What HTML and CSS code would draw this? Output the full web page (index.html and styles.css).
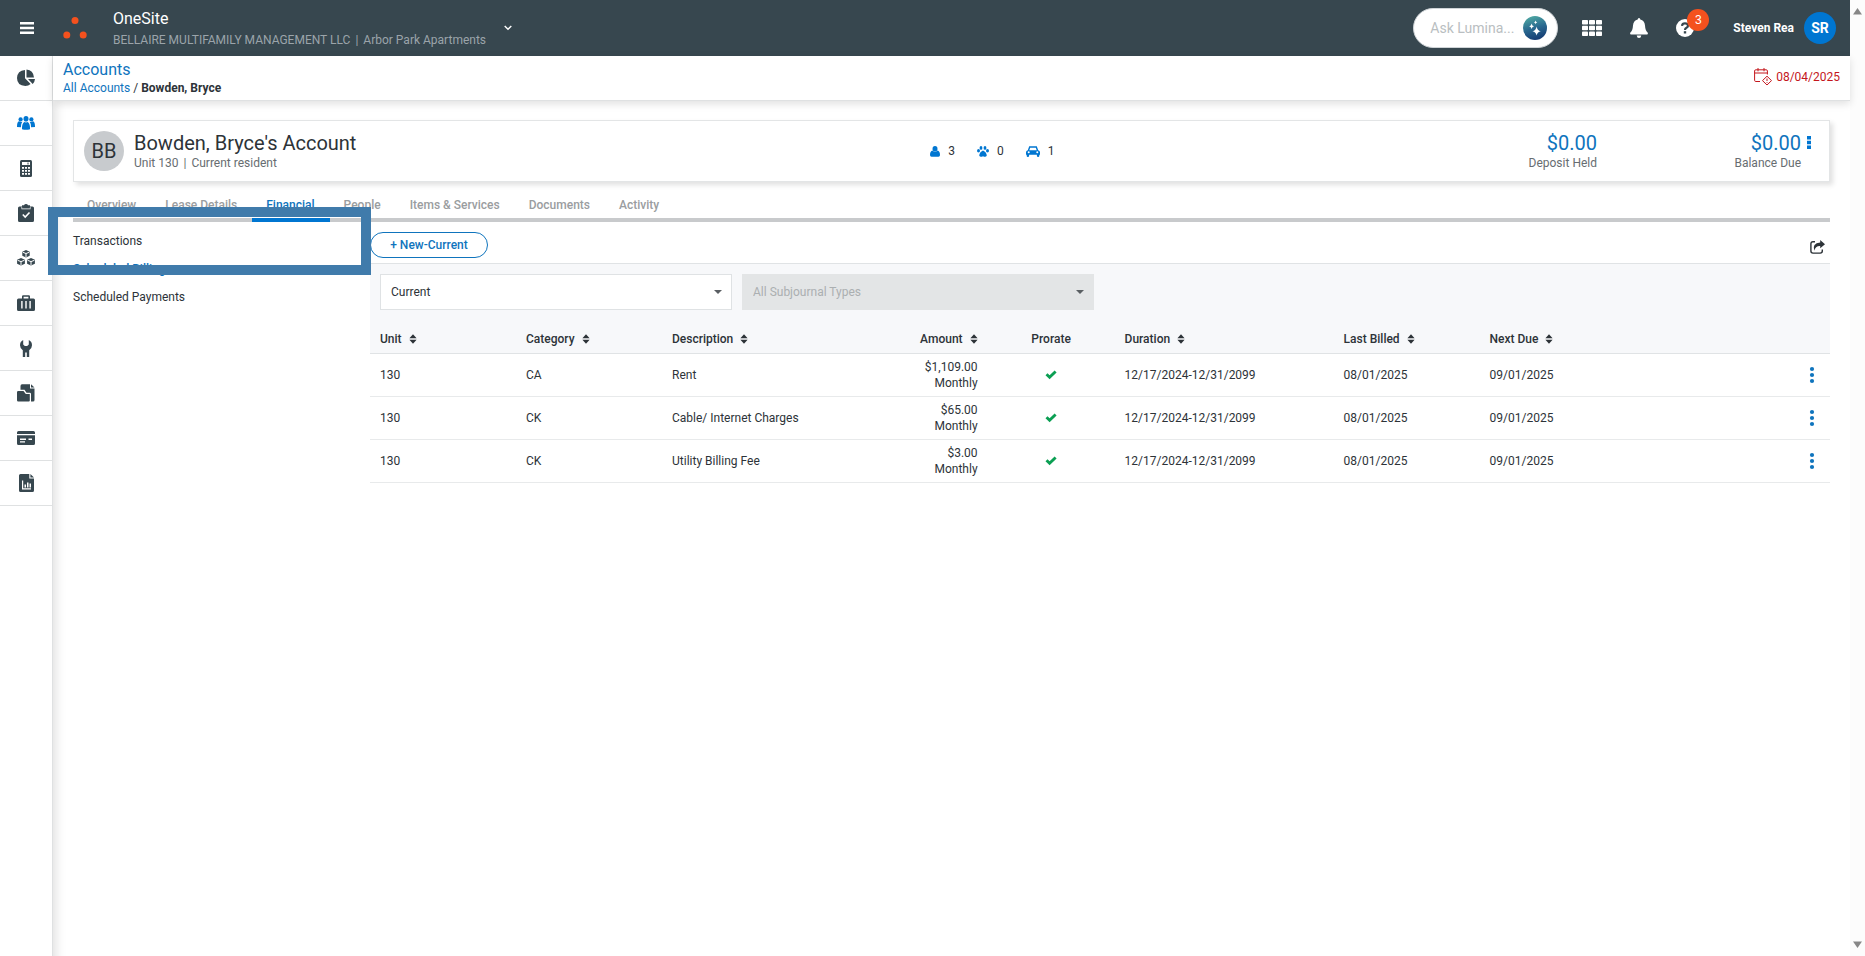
FILE: index.html
```html
<!DOCTYPE html>
<html lang="en">

<head>
    <meta charset="UTF-8">
    <meta name="viewport" content="width=device-width, initial-scale=1.0">
    <title>OneSite - Bowden, Bryce's Account</title>
    <link rel="stylesheet" href="styles.css">
</head>

<body>
    <!-- shared icons -->
    <svg class="sprite" aria-hidden="true">
        <symbol id="icon-sort" viewBox="0 0 8 10">
            <path d="M4 0.3 7.6 4.2H0.4zM4 9.7 0.4 5.8h7.2z" />
        </symbol>
        <symbol id="icon-check" viewBox="0 0 12 10">
            <path d="M0.5 5.2 2.5 3.2 4.6 5.2 9.6 0.5 11.6 2.4 4.6 9.2z" />
        </symbol>
        <symbol id="icon-dots" viewBox="0 0 6 18">
            <circle cx="3" cy="3" r="2.1" />
            <circle cx="3" cy="9" r="2.1" />
            <circle cx="3" cy="15" r="2.1" />
        </symbol>
    </svg>

    <div class="app">
        <header class="topbar">
            <button class="icon-button menu-button" aria-label="Menu">
                <svg width="14" height="12" viewBox="0 0 14 12"><path d="M0 0h14v2.4H0zM0 4.8h14v2.4H0zM0 9.6h14V12H0z" /></svg>
            </button>
            <svg class="logo" width="24" height="22" viewBox="0 0 24 22">
                <circle cx="12" cy="3.6" r="3.5" />
                <circle cx="3.8" cy="18" r="3.5" />
                <circle cx="20.2" cy="18" r="3.5" />
            </svg>
            <div class="product">
                <div class="product-name">OneSite</div>
                <div class="product-property">BELLAIRE MULTIFAMILY MANAGEMENT LLC<span class="sep">|</span>Arbor Park Apartments</div>
            </div>
            <button class="icon-button property-button" aria-label="Change property">
                <svg width="8" height="6" viewBox="0 0 8 6"><path class="line" d="M0.7 1 4 4.3 7.3 1" /></svg>
            </button>

            <div class="lumina">
                <input type="text" class="lumina-input" placeholder="Ask Lumina..." aria-label="Ask Lumina">
                <button class="icon-button" aria-label="Send">
                    <svg width="24" height="24" viewBox="0 0 24 24">
                        <defs>
                            <linearGradient id="lumina-fill" x1="0.3" y1="0" x2="0.6" y2="1">
                                <stop offset="0" stop-color="#4fa9a3" />
                                <stop offset="0.5" stop-color="#2a6a90" />
                                <stop offset="1" stop-color="#143a72" />
                            </linearGradient>
                        </defs>
                        <circle cx="12" cy="12" r="12" fill="url(#lumina-fill)" />
                        <path fill="#fff" d="M13.6 10.5Q14.2 14.6 17.8 15.2 14.2 15.8 13.6 19.6 13 15.8 9.4 15.2 13 14.6 13.6 10.5zM8.6 7.4Q9 9.8 11 10.2 9 10.6 8.6 13 8.2 10.6 6.2 10.2 8.2 9.8 8.6 7.4zM12.6 4.6Q12.9 6.1 14.2 6.4 12.9 6.7 12.6 8.2 12.3 6.7 11 6.4 12.3 6.1 12.6 4.6z" />
                    </svg>
                </button>
            </div>

            <button class="icon-button" aria-label="Apps">
                <svg width="20" height="16" viewBox="0 0 20 16">
                    <rect x="0" y="0" width="6" height="4.5" rx="0.8" />
                    <rect x="7" y="0" width="6" height="4.5" rx="0.8" />
                    <rect x="14" y="0" width="6" height="4.5" rx="0.8" />
                    <rect x="0" y="5.7" width="6" height="4.6" rx="0.8" />
                    <rect x="7" y="5.7" width="6" height="4.6" rx="0.8" />
                    <rect x="14" y="5.7" width="6" height="4.6" rx="0.8" />
                    <rect x="0" y="11.5" width="6" height="4.5" rx="0.8" />
                    <rect x="7" y="11.5" width="6" height="4.5" rx="0.8" />
                    <rect x="14" y="11.5" width="6" height="4.5" rx="0.8" />
                </svg>
            </button>
            <button class="icon-button" aria-label="Notifications">
                <svg width="18" height="20" viewBox="0 0 18 20">
                    <path d="M9 0q1.300 0 1.300 1.500Q14.600 2.400 15 7.500q.3 5.500 2.800 7.200.4 1.700-.8 1.800H1q-1.200-.1-.8-1.800Q2.700 13 3 7.500 3.400 2.400 7.700 1.500 7.700 0 9 0zM6.700 17.500h4.600Q11 20 9 20t-2.300-2.500z" />
                </svg>
            </button>
            <button class="icon-button help-button" aria-label="Help">
                <svg width="18" height="18" viewBox="0 0 18 18">
                    <circle cx="9" cy="9" r="9" />
                    <path class="help-mark" d="M6 6.800Q6.200 4.400 9 4.400t3 2.300q0 1.300-1.500 2T9 11" />
                    <rect class="help-dot" x="7.800" y="12.200" width="2.400" height="2.300" />
                </svg>
                <span class="badge">3</span>
            </button>
            <div class="user-name">Steven Rea</div>
            <div class="user-avatar">SR</div>
        </header>

        <div class="body">
            <nav class="rail">
                <a href="#" class="rail-item" aria-label="Dashboard">
                    <svg width="18" height="18" viewBox="0 0 18 18">
                        <path d="M8 1v8.200l5.600 5.800Q11.500 17 8.300 17 0 16.500 0 9 .3 1.700 8 1zM9.500.5Q16.300 1 17 8.500H9.500zM11 10h7q-.2 2.800-2.300 4.900z" />
                    </svg>
                </a>
                <a href="#" class="rail-item active" aria-label="Residents">
                    <svg width="18" height="14" viewBox="0 0 18 14">
                        <ellipse cx="9" cy="2.800" rx="2.500" ry="2.800" />
                        <circle cx="3.600" cy="3.400" r="2.100" />
                        <circle cx="14.400" cy="3.400" r="2.100" />
                        <path d="M5 13.300q-.3-6 2.500-7.300 1.500.8 3 0 2.800 1.300 2.500 7.300-4 1-8 0zM0 11Q-.1 6 2 5.300q2 .9 3.300.5Q4 7.500 3.900 11.200zM18 11q.1-5-2-5.700-2 .9-3.300.5 1.300 1.700 1.400 5.400z" />
                    </svg>
                </a>
                <a href="#" class="rail-item" aria-label="Calculator">
                    <svg width="12" height="17" viewBox="0 0 12 17">
                        <rect width="12" height="17" rx="1.500" />
                        <path class="cut" d="M2 2h8v3H2zM2 7h2v1.800H2zM5 7h2v1.800H5zM8 7h2v1.800H8zM2 10h2v1.800H2zM5 10h2v1.800H5zM8 10h2v1.800H8zM2 13h2v1.800H2zM5 13h2v1.800H5zM8 13h2v1.800H8z" />
                        <path d="M7.500 2.500h1v2h-1z" />
                    </svg>
                </a>
                <a href="#" class="rail-item" aria-label="Tasks">
                    <svg width="16" height="18" viewBox="0 0 16 18">
                        <path d="M1.500 2.500H4V1.200h2Q6.500 0 8 0t2 1.200h2v1.300h2.500Q16 2.500 16 4v12.500q0 1.500-1.500 1.500h-13Q0 18 0 16.500V4q0-1.500 1.500-1.500z" />
                        <path class="cut" d="M3.500 3v2.200h9V3h-.6v1.500H4.100V3z" />
                        <path class="cut-line" d="M4.800 10.500 7.200 13l4.300-4.500" />
                    </svg>
                </a>
                <a href="#" class="rail-item" aria-label="Inventory">
                    <svg width="18" height="16" viewBox="0 0 18 16">
                        <path d="M9 0l3.700 1.800v4L9 7.500 5.300 5.800v-4zM4 8l3.900 1.800v4L4 15.500.1 13.800v-4zM14 8l3.900 1.800v4L14 15.500l-3.900-1.700v-4z" />
                        <path class="cut-thin" d="M5.800 2.300 9 3.500l3.200-1.200M9 3.500V7M.6 10.300 4 11.600l3.400-1.300M4 11.600V15M10.600 10.300l3.400 1.300 3.400-1.300M14 11.600V15" />
                    </svg>
                </a>
                <a href="#" class="rail-item" aria-label="Move-ins">
                    <svg width="18" height="16" viewBox="0 0 18 16">
                        <path d="M1.500 3.500H5V1.500Q5 .3 6.200.3h5.600Q13 .3 13 1.500v2h3.500Q18 3.500 18 5v9.500q0 1.500-1.500 1.500h-15Q0 16 0 14.500V5q0-1.500 1.500-1.500z" />
                        <path class="cut" d="M6.600 1.800h4.800v1.700H6.600zM4.200 6h1.400v7.500H4.200zM8.300 6h1.400v7.500H8.300zM12.400 6h1.400v7.500h-1.400z" />
                    </svg>
                </a>
                <a href="#" class="rail-item" aria-label="Maintenance">
                    <svg width="12" height="17" viewBox="0 0 12 17">
                        <path d="M3.200 0v4.500L4.800 6h2.400l1.600-1.500V0Q12 1.500 12 5.200q0 3-2.800 5V17H6.800v-4.500H5.200V17H2.800v-6.800Q0 8.200 0 5.200 0 1.500 3.200 0z" />
                    </svg>
                </a>
                <a href="#" class="rail-item" aria-label="Documents">
                    <svg width="18" height="18" viewBox="0 0 18 18">
                        <path d="M3.500 5.800V2Q3.500.3 5 .3h8V4.500h4.500V16q0 1.500-1.500 1.500h-2V10q0-1.200-1.200-1.200H9.500L7.500 5.800zM14 .3l3.500 3.200H14zM1.200 7H6.500l2.300 3h4V16.500q0 1-1 1H1.200Q0 17.500 0 16.300V8.200Q0 7 1.200 7z" />
                    </svg>
                </a>
                <a href="#" class="rail-item" aria-label="Payments">
                    <svg width="18" height="14" viewBox="0 0 18 14">
                        <path d="M1.500 0h15Q18 0 18 1.500V3H0V1.500Q0 0 1.500 0zM0 4.300h18v8.200q0 1.500-1.500 1.500h-15Q0 14 0 12.500z" />
                        <path class="cut" d="M3 7.500h6v1.400H3zM3 10.200h5v1.300H3zM11.500 7.500H15v1.400h-3.500z" />
                    </svg>
                </a>
                <a href="#" class="rail-item" aria-label="Reports">
                    <svg width="15" height="18" viewBox="0 0 15 18">
                        <path d="M1.500 0h8.800v4.600H15v11.900q0 1.500-1.500 1.500h-12Q0 18 0 16.500v-15Q0 0 1.500 0zM11.400 0 15 3.500h-3.600z" />
                        <path class="cut" d="M3 6.500h1.200v7.800H12v1.200H3zM5.500 10.500H7v3H5.500zM8 8.500h1.500v5H8zM10.500 9.500H12v4h-1.500z" />
                    </svg>
                </a>
            </nav>

            <div class="content">
                <div class="page-header">
                    <div>
                        <div class="page-title">Accounts</div>
                        <div class="breadcrumbs"><a href="#">All Accounts</a> / <strong>Bowden, Bryce</strong></div>
                    </div>
                    <div class="business-date">
                        <svg width="18" height="18" viewBox="0 0 18 18">
                            <path d="M6 13.500H1.800Q.6 13.500.6 12.300V3Q.6 1.800 1.800 1.800h10.400Q13.400 1.800 13.400 3v3.500M.6 5h12.800M4 0v3.300M10 0v3.300M13 8.200l4.500 4.400L13 17l-4.500-4.400zM13 10.500V13M13 14v.8" />
                        </svg>
                        08/04/2025
                    </div>
                </div>

                <main class="main">
                    <section class="account-card">
                        <div class="account-owner">
                            <div class="account-avatar">BB</div>
                            <div>
                                <h1 class="account-name">Bowden, Bryce's Account</h1>
                                <div class="account-note">Unit 130<span class="sep">|</span>Current resident</div>
                            </div>
                        </div>
                        <div class="account-counts">
                            <div class="count">
                                <svg width="10" height="11" viewBox="0 0 10 11">
                                    <ellipse cx="5" cy="2.800" rx="2.500" ry="2.800" />
                                    <path d="M2.500 4.500Q5 7 7.500 4.500 10 5 10 9q0 1.700-1.500 1.700h-7Q0 10.700 0 9q0-4 2.500-4.500z" />
                                </svg>
                                3
                            </div>
                            <div class="count">
                                <svg width="12" height="11" viewBox="0 0 12 11">
                                    <ellipse cx="4" cy="1.900" rx="1.400" ry="1.900" />
                                    <ellipse cx="8" cy="1.900" rx="1.400" ry="1.900" />
                                    <ellipse cx="1.500" cy="4.800" rx="1.500" ry="1.700" />
                                    <ellipse cx="10.500" cy="4.800" rx="1.500" ry="1.700" />
                                    <path d="M6 4.500Q9.500 6 9.800 9.500 9 11.700 6 10.300 3 11.700 2.200 9.500 2.500 6 6 4.500z" />
                                </svg>
                                0
                            </div>
                            <div class="count">
                                <svg width="14" height="11" viewBox="0 0 14 11">
                                    <path fill-rule="evenodd" d="M3.200.3h7.600l1.400 3.900q1.800.3 1.800 2v2.500h-.7v1.200q0 1.100-1.200 1.100t-1.200-1.100V8.700H3.100v1.200q0 1.100-1.200 1.100T.7 9.900V8.700H0V6.200q0-1.700 1.800-2zM4.200 1.700l-.9 2.500h7.400l-.9-2.500zM2.700 5.300a1 1 0 1 0 0 2 1 1 0 0 0 0-2zM11.300 5.300a1 1 0 1 0 0 2 1 1 0 0 0 0-2z" />
                                </svg>
                                1
                            </div>
                        </div>
                        <div class="account-balances">
                            <div class="balance">
                                <div class="balance-amount">$0.00</div>
                                <div class="account-note">Deposit Held</div>
                            </div>
                            <div class="balance">
                                <div class="balance-amount">$0.00</div>
                                <div class="account-note">Balance Due</div>
                            </div>
                            <button class="icon-button account-menu" aria-label="Account actions">
                                <svg width="4" height="13" viewBox="0 0 4 13"><path d="M0 0h4v3.500H0zM0 4.800h4v3.400H0zM0 9.500h4V13H0z" /></svg>
                            </button>
                        </div>
                    </section>

                    <div class="tab-area">
                        <nav class="tabs">
                            <a href="#" class="tab">Overview</a>
                            <a href="#" class="tab">Lease Details</a>
                            <a href="#" class="tab active">Financial</a>
                            <a href="#" class="tab">People</a>
                            <a href="#" class="tab">Items &amp; Services</a>
                            <a href="#" class="tab">Documents</a>
                            <a href="#" class="tab">Activity</a>
                        </nav>
                        <div class="callout"></div>

                        <div class="financial">
                            <nav class="side-links">
                                <a href="#">Transactions</a>
                                <a href="#" class="active">Scheduled Billing</a>
                                <a href="#">Scheduled Payments</a>
                            </nav>

                            <section class="billing">
                                <div class="toolbar">
                                    <button class="new-button">+ New-Current</button>
                                    <button class="icon-button export-button" aria-label="Export">
                                        <svg width="15" height="14" viewBox="0 0 15 14">
                                            <path class="line" d="M5 1.700H3Q.9 1.700.9 3.800v7.200q0 2.100 2.100 2.100h7.200q2.100 0 2.100-2.100V9.500" />
                                            <path d="M10.200 0 15 4.200l-4.800 4.100V6Q5.500 5.700 4.200 10.800 1.800 3 10.200 2.400z" />
                                        </svg>
                                    </button>
                                </div>

                                <div class="panel">
                                    <div class="filters">
                                        <div class="select-box">
                                            <select aria-label="Billing status">
                                                <option>Current</option>
                                            </select>
                                        </div>
                                        <div class="select-box">
                                            <select aria-label="Subjournal type" disabled>
                                                <option>All Subjournal Types</option>
                                            </select>
                                        </div>
                                    </div>

                                    <table class="billing-table">
                                        <thead>
                                            <tr>
                                                <th class="col-unit">Unit <svg class="sort"><use href="#icon-sort" /></svg></th>
                                                <th class="col-category">Category <svg class="sort"><use href="#icon-sort" /></svg></th>
                                                <th class="col-description">Description <svg class="sort"><use href="#icon-sort" /></svg></th>
                                                <th class="col-amount">Amount <svg class="sort"><use href="#icon-sort" /></svg></th>
                                                <th class="col-prorate">Prorate</th>
                                                <th class="col-duration">Duration <svg class="sort"><use href="#icon-sort" /></svg></th>
                                                <th class="col-date">Last Billed <svg class="sort"><use href="#icon-sort" /></svg></th>
                                                <th class="col-date">Next Due <svg class="sort"><use href="#icon-sort" /></svg></th>
                                                <th class="col-menu"></th>
                                            </tr>
                                        </thead>
                                        <tbody>
                                            <tr>
                                                <td>130</td>
                                                <td>CA</td>
                                                <td>Rent</td>
                                                <td class="col-amount">$1,109.00<br>Monthly</td>
                                                <td class="col-prorate"><svg class="check"><use href="#icon-check" /></svg></td>
                                                <td>12/17/2024-12/31/2099</td>
                                                <td>08/01/2025</td>
                                                <td>09/01/2025</td>
                                                <td class="col-menu"><button class="icon-button" aria-label="Row actions"><svg class="dots"><use href="#icon-dots" /></svg></button></td>
                                            </tr>
                                            <tr>
                                                <td>130</td>
                                                <td>CK</td>
                                                <td>Cable/ Internet Charges</td>
                                                <td class="col-amount">$65.00<br>Monthly</td>
                                                <td class="col-prorate"><svg class="check"><use href="#icon-check" /></svg></td>
                                                <td>12/17/2024-12/31/2099</td>
                                                <td>08/01/2025</td>
                                                <td>09/01/2025</td>
                                                <td class="col-menu"><button class="icon-button" aria-label="Row actions"><svg class="dots"><use href="#icon-dots" /></svg></button></td>
                                            </tr>
                                            <tr>
                                                <td>130</td>
                                                <td>CK</td>
                                                <td>Utility Billing Fee</td>
                                                <td class="col-amount">$3.00<br>Monthly</td>
                                                <td class="col-prorate"><svg class="check"><use href="#icon-check" /></svg></td>
                                                <td>12/17/2024-12/31/2099</td>
                                                <td>08/01/2025</td>
                                                <td>09/01/2025</td>
                                                <td class="col-menu"><button class="icon-button" aria-label="Row actions"><svg class="dots"><use href="#icon-dots" /></svg></button></td>
                                            </tr>
                                        </tbody>
                                    </table>
                                </div>
                            </section>
                        </div>
                    </div>
                </main>
            </div>
        </div>
    </div>

    <div class="scroll-track" aria-hidden="true">
        <svg width="9" height="7" viewBox="0 0 9 7"><path d="M4.500 0 9 6.500H0z" /></svg>
        <svg width="9" height="7" viewBox="0 0 9 7"><path d="M0 .5h9L4.500 7z" /></svg>
    </div>
</body>

</html>
```

FILE: styles.css
```css
* {
    box-sizing: border-box;
}

body {
    margin: 0;
    display: flex;
    height: 100vh;
    overflow: hidden;
    font-family: Roboto, sans-serif;
    font-size: 12px;
    line-height: 16px;
    color: #2d3338;
    background-color: #fff;
}

a {
    color: #0f74bd;
    text-decoration: none;
}

svg {
    display: block;
    fill: currentColor;
}

.sprite {
    position: absolute;
    width: 0;
    height: 0;
}

.line {
    fill: none;
    stroke: currentColor;
    stroke-width: 1.4;
}

.sep {
    margin: 0 5px;
}

.icon-button {
    display: block;
    padding: 0;
    border: none;
    background: none;
    color: inherit;
    cursor: pointer;
}

.app {
    flex: 1;
    min-width: 0;
    display: flex;
    flex-direction: column;
}

/* top bar */
.topbar {
    display: flex;
    align-items: center;
    height: 56px;
    padding: 0 14px 0 20px;
    background-color: #37474f;
    color: #fff;
}

.logo {
    margin-left: 29px;
    fill: #f4511e;
}

.product {
    margin-left: 26px;
    padding-top: 4px;
}

.product-name {
    font-size: 16px;
    line-height: 20px;
}

.product-property {
    line-height: 22px;
    color: #9ba4aa;
}

.property-button {
    margin-left: 18px;
}

.lumina {
    display: flex;
    align-items: center;
    justify-content: space-between;
    width: 145px;
    height: 40px;
    margin-left: auto;
    margin-right: 24px;
    padding: 0 10px 0 16px;
    border: 1px solid #cfd4d7;
    border-radius: 20px;
    background-color: #fff;
}

.lumina-input {
    width: 88px;
    padding: 0;
    border: none;
    outline: none;
    font-family: inherit;
    font-size: 14px;
}

.lumina-input::placeholder {
    color: #b9bec1;
}

.topbar .icon-button + .icon-button {
    margin-left: 28px;
}

.help-button {
    position: relative;
}

.help-mark {
    fill: none;
    stroke: #37474f;
    stroke-width: 2.2;
}

.help-dot {
    fill: #37474f;
}

.badge {
    position: absolute;
    top: -10px;
    left: 11px;
    width: 22px;
    height: 22px;
    border-radius: 50%;
    background-color: #f4511e;
    color: #fff;
    font-size: 12px;
    line-height: 22px;
}

.user-name {
    margin-left: 39px;
    font-weight: 700;
}

.user-avatar {
    width: 32px;
    height: 32px;
    margin-left: 10px;
    border-radius: 50%;
    background-color: #0076d1;
    font-size: 14px;
    font-weight: 700;
    line-height: 32px;
    text-align: center;
}

/* left icon rail */
.body {
    flex: 1;
    display: flex;
    min-height: 0;
}

.rail {
    position: relative;
    z-index: 1;
    width: 53px;
    border-right: 1px solid #dfe1e2;
    background-color: #fff;
    box-shadow: 3px 44px 10px rgba(0, 0, 0, 0.12);
}

.rail-item {
    display: flex;
    align-items: center;
    justify-content: center;
    height: 45px;
    border-bottom: 1px solid #dfe1e2;
    color: #37474f;
}

.rail-item.active {
    color: #0076d1;
}

.cut {
    fill: #fff;
}

.cut-line {
    fill: none;
    stroke: #fff;
    stroke-width: 1.6;
}

.cut-thin {
    fill: none;
    stroke: #fff;
    stroke-width: 1;
}

/* page header */
.content {
    flex: 1;
    min-width: 0;
    display: flex;
    flex-direction: column;
}

.page-header {
    position: relative;
    z-index: 2;
    display: flex;
    justify-content: space-between;
    height: 45px;
    padding: 4px 10px 0;
    border-bottom: 1px solid #dfe1e2;
    background-color: #fff;
    box-shadow: 0 3px 8px rgba(0, 0, 0, 0.12);
}

.page-title {
    font-size: 16px;
    line-height: 20px;
    color: #0f74bd;
}

.breadcrumbs {
    line-height: 16px;
}

.business-date {
    display: flex;
    align-items: center;
    gap: 4px;
    height: 34px;
    color: #c4161c;
}

.business-date svg {
    fill: none;
    stroke: currentColor;
}

.main {
    padding: 19px 20px 0;
}

/* account card */
.account-card {
    display: grid;
    grid-template-columns: 49% auto 1fr;
    align-items: center;
    height: 62px;
    padding: 0 18px 0 10px;
    border: 1px solid #e3e5e6;
    background-color: #fff;
    box-shadow: 3px 3px 5px rgba(0, 0, 0, 0.12);
}

.account-owner {
    display: flex;
    align-items: center;
    gap: 10px;
}

.account-avatar {
    width: 40px;
    height: 40px;
    border-radius: 50%;
    background-color: #c8cbce;
    font-size: 20px;
    line-height: 40px;
    text-align: center;
}

.account-name {
    margin: 0;
    font-size: 20px;
    font-weight: 400;
    line-height: 24px;
}

.account-note {
    color: #676d71;
}

.account-counts {
    display: flex;
    gap: 22px;
}

.count {
    display: flex;
    align-items: center;
    gap: 8px;
}

.count svg {
    color: #0076d1;
}

.account-balances {
    display: flex;
    justify-content: flex-end;
    text-align: right;
}

.balance {
    width: 204px;
}

.balance-amount {
    font-size: 20px;
    line-height: 24px;
    color: #0f74bd;
}

.account-menu {
    align-self: flex-start;
    margin: 5px 0 0 6px;
    color: #0076d1;
}

/* tabs */
.tab-area {
    position: relative;
    padding-top: 8px;
}

.tabs {
    display: flex;
    height: 32px;
    box-shadow: inset 0 -4px #c8cacc;
}

.tab {
    padding: 7px 15px 0 14px;
    font-weight: 500;
    color: #9a9d9f;
}

.tab.active {
    border-bottom: 4px solid #0076d1;
    color: #0f74bd;
}

/* frame drawn over the first side link */
.callout {
    position: absolute;
    top: 25px;
    left: -25px;
    width: 323px;
    height: 68px;
    border: 10px solid #407bab;
    z-index: 3;
}

.financial {
    display: flex;
}

.side-links {
    flex: none;
    width: 297px;
    display: flex;
    flex-direction: column;
    gap: 12px;
    padding-top: 11px;
}

.side-links a {
    color: #2d3338;
}

.side-links a.active {
    color: #0f74bd;
    font-weight: 500;
}

/* billing */
.billing {
    flex: 1;
}

.toolbar {
    display: flex;
    align-items: center;
    justify-content: space-between;
    height: 42px;
    padding: 4px 5px 0 0;
    border-bottom: 1px solid #e0e3e5;
}

.new-button {
    width: 118px;
    height: 26px;
    padding: 0;
    border: 1px solid #0f74bd;
    border-radius: 13px;
    background-color: #fff;
    color: #0f74bd;
    font-family: inherit;
    font-size: 12px;
    font-weight: 500;
    cursor: pointer;
}

.export-button {
    margin-top: 4px;
}

.panel {
    background-color: #f7f8fa;
}

.filters {
    display: flex;
    gap: 10px;
    padding: 10px 10px 16px;
}

.select-box {
    position: relative;
    width: 352px;
}

/* drop-down arrow */
.select-box::after {
    content: "";
    position: absolute;
    top: 16px;
    right: 10px;
    border: 4px solid transparent;
    border-top-color: #5a5f63;
    border-bottom: none;
}

.select-box select {
    display: block;
    width: 100%;
    height: 36px;
    padding: 0 10px;
    border: 1px solid #dfe2e4;
    border-radius: 0;
    appearance: none;
    background-color: #fff;
    color: #2d3338;
    font-family: inherit;
    font-size: 12px;
}

.select-box select:disabled {
    border-color: #e3e5e6;
    background-color: #e3e5e6;
    color: #abafb1;
    opacity: 1;
}

.billing-table {
    width: 100%;
    border-collapse: collapse;
    table-layout: fixed;
}

.billing-table th {
    height: 27px;
    padding: 0 10px;
    border-bottom: 1px solid #e0e3e5;
    font-weight: 500;
    text-align: left;
    white-space: nowrap;
}

.billing-table td {
    height: 43px;
    padding: 0 10px;
    border-bottom: 1px solid #e8eaeb;
    background-color: #fff;
}

.billing-table .col-unit,
.billing-table .col-category,
.billing-table .col-date {
    width: 10%;
}

.billing-table .col-description {
    width: 14.3%;
}

.billing-table .col-amount {
    width: 8%;
    text-align: right;
}

.billing-table .col-prorate {
    width: 8.7%;
    text-align: center;
}

.billing-table .col-duration {
    width: 15%;
}

.billing-table .col-menu {
    padding-right: 15px;
}

.col-menu .icon-button {
    margin-left: auto;
    color: #0f74bd;
}

.sort {
    display: inline-block;
    width: 8px;
    height: 10px;
    margin-left: 4px;
    vertical-align: -1px;
}

.check {
    width: 12px;
    height: 10px;
    margin: 0 auto;
    color: #0b9f53;
}

.dots {
    width: 6px;
    height: 18px;
}

.scroll-track {
    display: flex;
    flex-direction: column;
    align-items: center;
    justify-content: space-between;
    width: 15px;
    padding: 8px 0;
    background-color: #fcfcfc;
    color: #878787;
}
```
